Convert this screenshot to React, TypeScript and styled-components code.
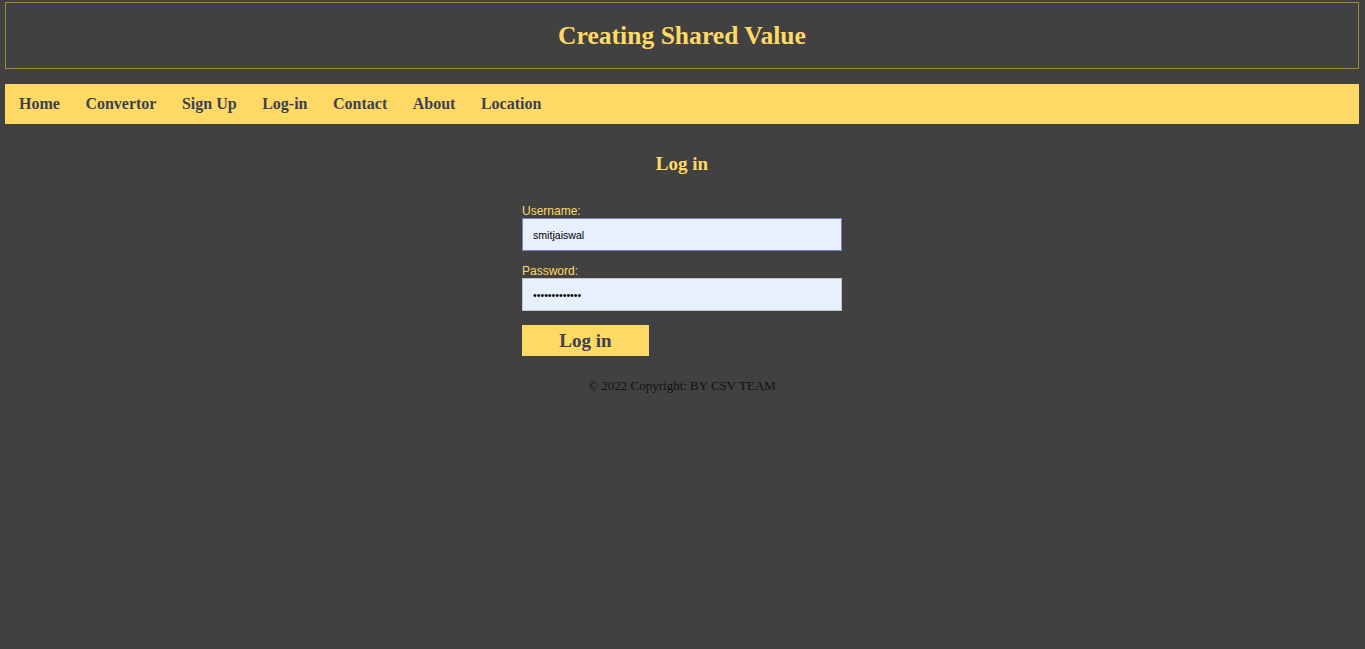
import React from "react";
import styled, { createGlobalStyle } from "styled-components";

const Global = createGlobalStyle`
  html, body { margin: 0; padding: 0; background: #414141; }
  body { font-family: "Liberation Serif", "Times New Roman", serif; }
`;

const Page = styled.div`
  padding: 2px 6px 0 5px;
  min-height: 647px;
`;

const Header = styled.header`
  border: 1px solid #a08a3a;
  height: 65px;
  display: flex;
  align-items: center;
  justify-content: center;
`;

const Title = styled.h1`
  margin: 0;
  color: #ffd966;
  font-size: 25.6px;
  font-weight: bold;
`;

const Nav = styled.nav`
  margin-top: 15px;
  height: 40px;
  background: #ffd966;
  display: flex;
  align-items: center;
  padding-left: 14px;
`;

const NavLink = styled.a`
  color: #3b4150;
  font-weight: bold;
  font-size: 16px;
  text-decoration: none;
  margin-right: 25.5px;
`;

const Main = styled.main`
  display: flex;
  flex-direction: column;
  align-items: center;
`;

const Heading = styled.h3`
  color: #ffd966;
  font-size: 19px;
  font-weight: bold;
  margin: 29px 0 0;
  line-height: 22px;
`;

const Form = styled.form`
  width: 320px;
  margin-top: 29px;
  display: flex;
  flex-direction: column;
`;

const Label = styled.label`
  color: #ffd966;
  font-family: "Liberation Sans", Arial, sans-serif;
  font-size: 12px;
  line-height: 14px;
`;

const Input = styled.input<{ $focused?: boolean }>`
  box-sizing: border-box;
  width: 320px;
  height: 33px;
  margin: 0 0 13px;
  padding: 0 10px;
  background: #e8f0fe;
  border: 1px solid ${(p) => (p.$focused ? "#7b7fc9" : "#c4c4c4")};
  outline: none;
  font-family: "Liberation Sans", Arial, sans-serif;
  font-size: 10.6px;
  color: #000;
`;

const Button = styled.button`
  box-sizing: border-box;
  width: 127px;
  height: 31px;
  margin-top: 1px;
  background: #ffd966;
  border: none;
  color: #3b4150;
  font-family: "Liberation Serif", "Times New Roman", serif;
  font-weight: bold;
  font-size: 19px;
  padding: 0;
  cursor: pointer;
`;

const Footer = styled.p`
  margin: 22px 0 0;
  font-size: 13px;
  color: #111;
`;

export default function App() {
  const links = ["Home", "Convertor", "Sign Up", "Log-in", "Contact", "About", "Location"];
  return (
    <>
      <Global />
      <Page>
        <Header>
          <Title>Creating Shared Value</Title>
        </Header>
        <Nav>
          {links.map((l) => (
            <NavLink key={l} href="#">{l}</NavLink>
          ))}
        </Nav>
        <Main>
          <Heading>Log in</Heading>
          <Form onSubmit={(e) => e.preventDefault()}>
            <Label>Username:</Label>
            <Input $focused defaultValue="smitjaiswal" />
            <Label>Password:</Label>
            <Input type="password" defaultValue="smitjaiswal12" />
            <Button type="submit">Log in</Button>
          </Form>
          <Footer>© 2022 Copyright: BY CSV TEAM</Footer>
        </Main>
      </Page>
    </>
  );
}
